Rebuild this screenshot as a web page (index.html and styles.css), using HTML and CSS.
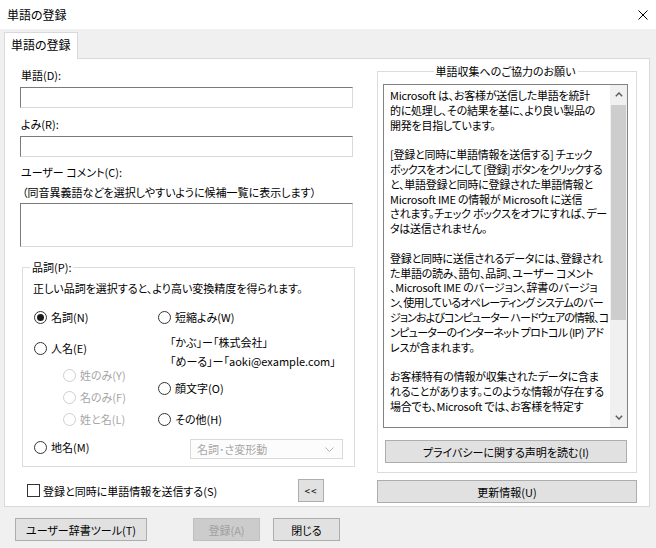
FILE: index.html
```html
<!DOCTYPE html>
<html lang="ja">
<head>
<meta charset="utf-8">
<title>単語の登録</title>
<link rel="stylesheet" href="styles.css">
</head>
<body>
<div class="titlebar">
  <span class="title">単語の登録</span>
  <svg class="close" width="10" height="10" viewBox="0 0 10 10"><path d="M0.5 0.5L9.5 9.5M9.5 0.5L0.5 9.5" stroke="#000" stroke-width="1" fill="none"/></svg>
</div>
<div class="tabs"><div class="tab">単語の登録</div></div>
<div class="panel">
  <div class="left">
    <div class="label">単語(D):</div>
    <div class="input"></div>
    <div class="label gap8">よみ(R):</div>
    <div class="input"></div>
    <div class="label gap7">ユーザー コメント(C):</div>
    <div class="label sub">（同音異義語などを選択しやすいように候補一覧に表示します）</div>
    <div class="textarea"></div>
    <fieldset class="group pos-group">
      <legend>品詞(P):</legend>
      <div class="hint">正しい品詞を選択すると、より高い変換精度を得られます。</div>
      <div class="pos">
        <div class="col col-a">
          <div class="radio"><span class="circle on"></span><span>名詞(N)</span></div>
          <div class="radio r-person"><span class="circle"></span><span>人名(E)</span></div>
          <div class="radio off r-sub1"><span class="circle"></span><span>姓のみ(Y)</span></div>
          <div class="radio off r-sub"><span class="circle"></span><span>名のみ(F)</span></div>
          <div class="radio off r-sub"><span class="circle"></span><span>姓と名(L)</span></div>
        </div>
        <div class="col col-b">
          <div class="radio"><span class="circle"></span><span>短縮よみ(W)</span></div>
          <div class="example ex1">「かぶ」ー「株式会社」</div>
          <div class="example ex2">「めーる」ー「aoki@example.com」</div>
          <div class="radio r-face"><span class="circle"></span><span>顔文字(O)</span></div>
          <div class="radio r-other"><span class="circle"></span><span>その他(H)</span></div>
        </div>
      </div>
      <div class="last-row">
        <div class="radio"><span class="circle"></span><span>地名(M)</span></div>
        <div class="select">
          <span>名詞･さ変形動</span>
          <svg width="9" height="5" viewBox="0 0 9 5"><path d="M0.5 0.5L4.5 4.5L8.5 0.5" stroke="#b4b4b4" stroke-width="1" fill="none"/></svg>
        </div>
      </div>
    </fieldset>
    <div class="send-row">
      <span class="check"></span>
      <span class="check-label">登録と同時に単語情報を送信する(S)</span>
      <div class="btn small">&lt;&lt;</div>
    </div>
  </div>
  <div class="right">
    <fieldset class="group info-group">
      <legend>単語収集へのご協力のお願い</legend>
      <div class="memo">
        <div class="memo-text">Microsoft は、お客様が送信した単語を統計<br>的に処理し、その結果を基に、より良い製品の<br>開発を目指しています。<br><br>[登録と同時に単語情報を送信する] チェック<br><span class="tight">ボックスをオンにして [登録] ボタンをクリックする</span><br>と、単語登録と同時に登録された単語情報と<br>Microsoft IME の情報が Microsoft に送信<br>されます。チェック ボックスをオフにすれば、デー<br>タは送信されません。<br><br>登録と同時に送信されるデータには、登録され<br>た単語の読み、語句、品詞、ユーザー コメント<br>、Microsoft IME のバージョン、辞書のバージョ<br><span class="tight">ン、使用しているオペレーティング システムのバー</span><br><span class="tighter">ジョンおよびコンピューター ハードウェアの情報、コ</span><br><span class="tight">ンピューターのインターネット プロトコル (IP) アド</span><br>レスが含まれます。<br><br>お客様特有の情報が収集されたデータに含ま<br>れることがあります。このような情報が存在する<br>場合でも、Microsoft では、お客様を特定す</div>
        <div class="scrollbar">
          <div class="arrow up"><svg width="8" height="5" viewBox="0 0 8 5"><path d="M0.8 4.2L4 1L7.2 4.2" stroke="#606060" stroke-width="1.5" fill="none"/></svg></div>
          <div class="thumb"></div>
          <div class="track"></div>
          <div class="arrow down"><svg width="8" height="5" viewBox="0 0 8 5"><path d="M0.8 0.8L4 4L7.2 0.8" stroke="#606060" stroke-width="1.5" fill="none"/></svg></div>
        </div>
      </div>
      <div class="btn privacy">プライバシーに関する声明を読む(I)</div>
    </fieldset>
    <div class="btn update">更新情報(U)</div>
  </div>
</div>
<div class="footer">
  <div class="btn tool">ユーザー辞書ツール(T)</div>
  <div class="btn disabled reg">登録(A)</div>
  <div class="btn closebtn">閉じる</div>
</div>
</body>
</html>
```

FILE: styles.css
```css
* { box-sizing: border-box; }
html, body { margin: 0; padding: 0; }
body {
  width: 656px;
  height: 548px;
  overflow: hidden;
  background: #f0f0f0;
  font-family: "Noto Sans CJK JP", "Noto Sans", sans-serif;
  font-size: 11px;
  line-height: 16px;
  color: #000;
  font-feature-settings: "palt";
}
.titlebar {
  height: 29px;
  background: #fff;
  display: flex;
  align-items: center;
  justify-content: space-between;
  padding: 0 8px 0 7px;
  font-size: 12px;
}
.close { display: block; }
.tabs {
  display: flex;
  padding-left: 4px;
  margin-top: 3px;
  height: 26px;
}
.tab {
  position: relative;
  z-index: 1;
  height: 27px;
  padding: 0 6px 2px 6px;
  border: 1px solid #d9d9d9;
  border-bottom: none;
  background: #fff;
  display: flex;
  align-items: center;
  font-size: 12px;
}
.panel {
  margin-left: 4px;
  width: 646px;
  height: 449px;
  border: 1px solid #d9d9d9;
  background: #fff;
  display: flex;
}
.left {
  margin-left: 15px;
  width: 335px;
  padding-top: 8px;
  display: flex;
  flex-direction: column;
}
.label { height: 16px; white-space: nowrap; margin-left: 1px; }
.gap8 { margin-top: 8px; }
.gap7 { margin-top: 7px; }
.sub { margin-top: 4px; margin-left: 2px; }
.input, .textarea {
  width: 333px;
  margin-top: 4px;
  height: 21px;
  background: #fff;
  border-top: 1px solid #7a7a7a;
  border-left: 1px solid #7a7a7a;
  border-right: 1px solid #dadada;
  border-bottom: 1px solid #dadada;
}
.textarea { margin-top: 3px; height: 44px; }
.group {
  margin: 0;
  border: 1px solid #dcdcdc;
  min-width: 0;
}
.group legend {
  padding: 0 2px;
  line-height: 16px;
}
.pos-group {
  margin: 12px 0 0 2px;
  width: 333px;
  padding: 5px 11px 7px 10px;
}
.pos-group legend { margin-left: -3px; }
.hint { height: 16px; white-space: nowrap; }
.pos { display: flex; margin-top: 13px; }
.col { display: flex; flex-direction: column; }
.col-a { width: 124px; }
.radio {
  display: flex;
  align-items: center;
  gap: 4px;
  height: 16px;
  white-space: nowrap;
}
.circle {
  flex: none;
  width: 13px;
  height: 13px;
  margin-left: 1px;
  border: 1px solid #333;
  border-radius: 50%;
  background: #fff;
  display: flex;
  align-items: center;
  justify-content: center;
}
.circle.on::after {
  content: "";
  width: 7px;
  height: 7px;
  border-radius: 50%;
  background: #1a1a1a;
}
.radio.off { color: #a6a6a6; }
.radio.off .circle { border-color: #cfcfcf; }
.r-person { margin-top: 15px; }
.r-sub1 { margin-top: 11px; margin-left: 29px; }
.r-sub { margin-top: 6px; margin-left: 29px; }
.example { height: 16px; margin-left: 13px; white-space: nowrap; }
.ex1 { margin-top: 9px; }
.ex2 { margin-top: 3px; }
.r-face { margin-top: 11px; }
.r-other { margin-top: 15px; }
.last-row {
  display: flex;
  align-items: flex-start;
  margin-top: 12px;
  height: 20px;
}
.select {
  margin-left: auto;
  width: 153px;
  height: 20px;
  border: 1px solid #d9d9d9;
  background: #fcfcfc;
  color: #a6a6a6;
  display: flex;
  align-items: center;
  justify-content: space-between;
  padding: 0 8px 0 6px;
}
.select svg { display: block; }
.send-row {
  display: flex;
  align-items: center;
  margin-top: 12px;
  height: 23px;
}
.check {
  width: 13px;
  height: 13px;
  margin-left: 7px;
  border: 1px solid #333;
  background: #fff;
  flex: none;
}
.check-label { margin-left: 3px; white-space: nowrap; }
.btn {
  height: 23px;
  border: 1px solid #adadad;
  background: #e1e1e1;
  display: flex;
  align-items: center;
  justify-content: center;
  white-space: nowrap;
}
.btn.small {
  width: 26px;
  margin-left: auto;
  margin-right: 31px;
  letter-spacing: 1px;
  font-size: 10px;
}
.btn.disabled {
  background: #cccccc;
  border-color: #bfbfbf;
  color: #a0a0a0;
}
.right {
  margin-left: 22px;
  width: 260px;
  padding-top: 4px;
  display: flex;
  flex-direction: column;
}
.info-group {
  width: 260px;
  height: 410px;
  padding: 5px 8px 8px 5px;
}
.info-group legend { margin: 0 auto; }
.memo {
  width: 245px;
  height: 344px;
  border: 1px solid #828282;
  background: #fff;
  display: flex;
}
.memo-text {
  flex: 1;
  height: 330px;
  overflow: hidden;
  padding: 3px 0 0 6px;
  line-height: 14.8px;
  letter-spacing: -0.25px;
  white-space: nowrap;
}
.tight { letter-spacing: -0.7px; }
.tighter { letter-spacing: -0.9px; }
.scrollbar {
  width: 17px;
  background: #f0f0f0;
  display: flex;
  flex-direction: column;
}
.arrow {
  height: 19px;
  display: flex;
  align-items: center;
  justify-content: center;
}
.arrow.down { height: 17px; padding-bottom: 2px; }
.arrow svg { display: block; }
.thumb {
  height: 215px;
  margin: 1px 1px 0 1px;
  background: #cdcdcd;
}
.track { flex: 1; }
.privacy {
  margin-top: 12px;
  margin-left: 2px;
  width: 242px;
}
.update { margin-top: 7px; width: 260px; }
.footer {
  display: flex;
  margin-top: 11px;
  padding-left: 15px;
}
.tool { width: 132px; }
.reg { width: 67px; margin-left: 46px; }
.closebtn { width: 67px; margin-left: 13px; }
```
